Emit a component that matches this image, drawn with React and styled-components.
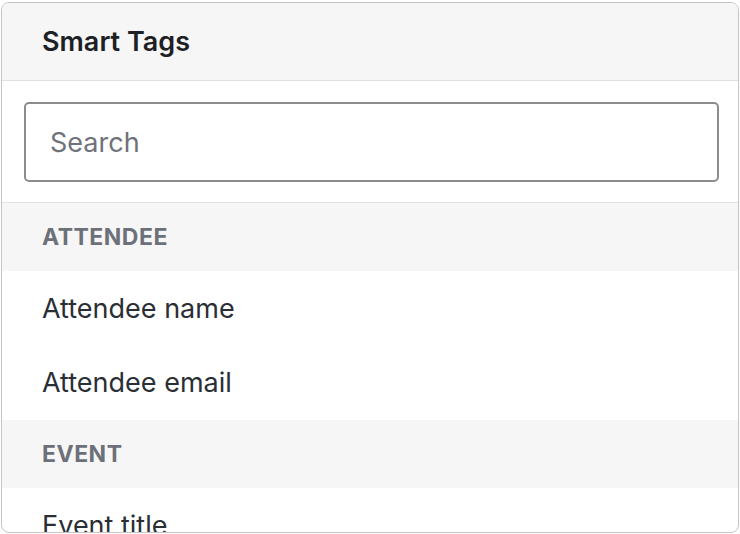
import React from 'react';
import styled, { createGlobalStyle } from 'styled-components';

const GlobalStyle = createGlobalStyle`
  html, body {
    margin: 0;
    padding: 0;
    background: #ffffff;
  }
  body {
    font-family: Inter, "Noto Sans", "Liberation Sans", sans-serif;
    -webkit-font-smoothing: antialiased;
  }
  * {
    box-sizing: border-box;
  }
`;

const groups = [
  { title: 'Attendee', tags: ['Attendee name', 'Attendee email'] },
  { title: 'Event', tags: ['Event title'] },
];

const App = () => {
  return (
    <Page>
      <GlobalStyle />
      <Panel>
        <Header>
          <HeaderTitle>Smart Tags</HeaderTitle>
        </Header>
        <SearchBox>
          <SearchInput placeholder="Search" />
        </SearchBox>
        <TagList>
          {groups.map((group) => (
            <Group key={group.title}>
              <GroupTitle>{group.title}</GroupTitle>
              {group.tags.map((tag) => (
                <TagItem key={tag}>{tag}</TagItem>
              ))}
            </Group>
          ))}
        </TagList>
      </Panel>
    </Page>
  );
};

export default App;

const Page = styled.div`
  width: 740px;
  height: 534px;
  padding: 2px 1px 1px 1px;
  overflow: hidden;
`;

const Panel = styled.div`
  display: flex;
  flex-direction: column;
  height: 100%;
  background: #ffffff;
  border: 1px solid #c4c4c4;
  border-radius: 8px;
  overflow: hidden;
`;

const Header = styled.div`
  flex: 0 0 auto;
  height: 78px;
  display: flex;
  align-items: center;
  padding: 0 40px;
  background: #f6f6f6;
  border-bottom: 1px solid #e0e0e0;
`;

const HeaderTitle = styled.h2`
  margin: 0;
  font-size: 27px;
  font-weight: 600;
  color: #1d2024;
`;

const SearchBox = styled.div`
  flex: 0 0 auto;
  padding: 21px 19px 20px 22px;
  border-bottom: 1px solid #e2e2e2;
`;

const SearchInput = styled.input`
  display: block;
  width: 100%;
  height: 80px;
  padding: 0 24px;
  border: 2px solid #8c8c8c;
  border-radius: 5px;
  font-family: inherit;
  font-size: 27px;
  color: #2b2f36;
  background: #ffffff;
  outline: none;

  &::placeholder {
    color: #6e727a;
  }
`;

const TagList = styled.div`
  flex: 1 1 auto;
  overflow: hidden;
`;

const Group = styled.div`
  display: flex;
  flex-direction: column;
`;

const GroupTitle = styled.div`
  height: 68px;
  display: flex;
  align-items: center;
  padding: 0 40px;
  background: #f6f6f6;
  font-size: 23px;
  font-weight: 700;
  letter-spacing: 0.5px;
  text-transform: uppercase;
  color: #6c7078;
`;

const TagItem = styled.div`
  height: 74.5px;
  display: flex;
  align-items: center;
  padding: 0 40px;
  font-size: 27px;
  font-weight: 400;
  color: #2a2e35;
`;
